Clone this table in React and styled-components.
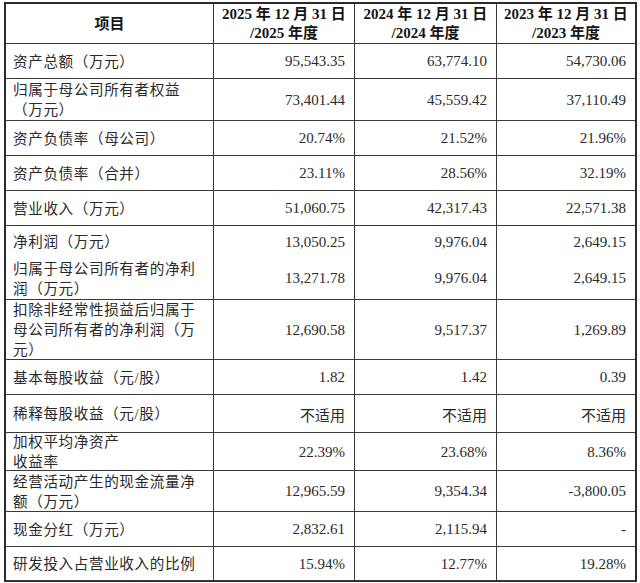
import React from "react";
import styled, { createGlobalStyle } from "styled-components";

const GlobalStyle = createGlobalStyle`
  html, body {
    margin: 0;
    padding: 0;
    background: #fff;
  }
  body {
    font-family: "Liberation Serif", "Noto Sans CJK SC", serif;
    color: #1e1e1e;
  }
`;

const Page = styled.div`
  padding: 2px 0 0 4px;
`;

const Grid = styled.div`
  display: grid;
  grid-template-columns: 208px 141px 142px 138px;
  grid-template-rows: ${(p) => p.rows.map((h) => `${h}px`).join(" ")};
  width: max-content;
  border: 2px solid #2b2b2b;
  border-bottom-width: 1px;
`;

const Cell = styled.div`
  box-sizing: border-box;
  display: flex;
  align-items: center;
  border-bottom: ${(p) => (p.noBottom ? "none" : "1px solid #3a3a3a")};
  border-right: ${(p) => (p.last ? "none" : "1px solid #3a3a3a")};
  white-space: nowrap;
`;

const HeadCell = styled(Cell)`
  justify-content: center;
  text-align: center;
  font-weight: bold;
  font-size: 15px;
  line-height: 19px;
  padding-top: 1px;
  color: #151515;
`;

const LabelCell = styled(Cell)`
  font-size: 14.6px;
  letter-spacing: 0.6px;
  line-height: 20px;
  padding: 1px 4px 0 7px;
  color: #2a2a2a;
`;

const ValueCell = styled(Cell)`
  justify-content: flex-end;
  font-size: 15px;
  padding: 1px 9px 0 4px;
  color: #2a2a2a;
`;

const rows = [
  { label: ["资产总额（万元）"], h: 35, v: ["95,543.35", "63,774.10", "54,730.06"] },
  { label: ["归属于母公司所有者权益", "（万元）"], h: 42, v: ["73,401.44", "45,559.42", "37,110.49"] },
  { label: ["资产负债率（母公司）"], h: 35, v: ["20.74%", "21.52%", "21.96%"] },
  { label: ["资产负债率（合并）"], h: 35, v: ["23.11%", "28.56%", "32.19%"] },
  { label: ["营业收入（万元）"], h: 35, v: ["51,060.75", "42,317.43", "22,571.38"] },
  { label: ["净利润（万元）"], h: 31, v: ["13,050.25", "9,976.04", "2,649.15"], noBottom: true },
  {
    label: ["归属于母公司所有者的净利", "润（万元）"],
    h: 43,
    v: ["13,271.78", "9,976.04", "2,649.15"],
  },
  {
    label: ["扣除非经常性损益后归属于", "母公司所有者的净利润（万", "元）"],
    h: 60,
    v: ["12,690.58", "9,517.37", "1,269.89"],
  },
  { label: ["基本每股收益（元/股）"], h: 35, v: ["1.82", "1.42", "0.39"] },
  { label: ["稀释每股收益（元/股）"], h: 38, v: ["不适用", "不适用", "不适用"] },
  { label: ["加权平均净资产", "收益率"], h: 38, v: ["22.39%", "23.68%", "8.36%"] },
  { label: ["经营活动产生的现金流量净", "额（万元）"], h: 41, v: ["12,965.59", "9,354.34", "-3,800.05"] },
  { label: ["现金分红（万元）"], h: 35, v: ["2,832.61", "2,115.94", "-"] },
  { label: ["研发投入占营业收入的比例"], h: 34, v: ["15.94%", "12.77%", "19.28%"] },
];

const years = ["2025", "2024", "2023"];

const App = () => {
  const heights = [40, ...rows.map((r) => r.h)];
  return (
    <Page>
      <GlobalStyle />
      <Grid rows={heights}>
        <HeadCell>项目</HeadCell>
        {years.map((y, i) => (
          <HeadCell key={y} last={i === years.length - 1}>
            {y} 年 12 月 31 日
            <br />/{y} 年度
          </HeadCell>
        ))}
        {rows.map((row, i) => (
          <React.Fragment key={i}>
            <LabelCell noBottom={row.noBottom}>
              <div>
                {row.label.map((line, j) => (
                  <React.Fragment key={j}>
                    {j > 0 && <br />}
                    {line}
                  </React.Fragment>
                ))}
              </div>
            </LabelCell>
            {row.v.map((val, j) => (
              <ValueCell key={j} noBottom={row.noBottom} last={j === row.v.length - 1}>
                {val}
              </ValueCell>
            ))}
          </React.Fragment>
        ))}
      </Grid>
    </Page>
  );
};

export default App;
